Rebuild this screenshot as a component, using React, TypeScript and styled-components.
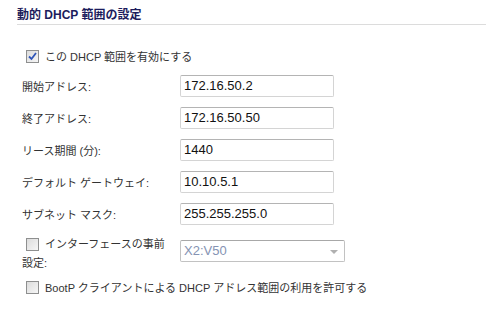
import React from 'react';
import styled, { createGlobalStyle } from 'styled-components';

const GlobalStyle = createGlobalStyle`
    body {
        margin: 0;
        background: #ffffff;
        font-family: 'Liberation Sans', 'Noto Sans CJK JP', sans-serif;
        color: #333333;
    }
`;

const CJK = `'Liberation Sans', 'Noto Sans CJK JP', sans-serif`;

interface Field {
    label: string;
    value: string;
}

const fields: Field[] = [
    { label: '開始アドレス:', value: '172.16.50.2' },
    { label: '終了アドレス:', value: '172.16.50.50' },
    { label: 'リース期間 (分):', value: '1440' },
    { label: 'デフォルト ゲートウェイ:', value: '10.10.5.1' },
    { label: 'サブネット マスク:', value: '255.255.255.0' },
];

const Check: React.FunctionComponent<{ checked?: boolean }> = ({ checked }) => (
    <Box>
        {checked && (
            <svg width="9" height="9" viewBox="0 0 9 9">
                <path d="M1 4.5 L3.5 7 L8 1" fill="none" stroke="#2f55b8" strokeWidth="1.8" />
            </svg>
        )}
    </Box>
);

const App: React.FunctionComponent = () => {
    return (
        <Page>
            <GlobalStyle />
            <Title>動的 DHCP 範囲の設定</Title>

            <CheckRow>
                <Check checked />
                <CheckText>この DHCP 範囲を有効にする</CheckText>
            </CheckRow>

            <Form>
                {fields.map(f => (
                    <Row key={f.label}>
                        <Label>{f.label}</Label>
                        <Input>{f.value}</Input>
                    </Row>
                ))}

                <IfaceRow>
                    <IfaceLabel>
                        <FirstLine>
                            <Check />
                            <CheckText>インターフェースの事前</CheckText>
                        </FirstLine>
                        設定:
                    </IfaceLabel>
                    <Select>
                        X2:V50
                        <Arrow />
                    </Select>
                </IfaceRow>
            </Form>

            <BootRow>
                <Check />
                <CheckText>BootP クライアントによる DHCP アドレス範囲の利用を許可する</CheckText>
            </BootRow>
        </Page>
    );
};

export default App;

const Page = styled.div`
    padding: 8px 0 0 17px;
    width: 469px;
`;

const Title = styled.div`
    font-family: ${CJK};
    font-size: 12px;
    font-weight: bold;
    color: #1c1c5c;
    line-height: 15px;
    padding-bottom: 1px;
    border-bottom: 1px solid #dcdcdc;
`;

const CheckRow = styled.div`
    display: flex;
    align-items: center;
    margin: 24px 0 0 9px;
    height: 14px;
`;

const Box = styled.span`
    box-sizing: border-box;
    width: 13px;
    height: 13px;
    border: 1px solid #8e8f8f;
    background: linear-gradient(135deg, #dcdcdc 0%, #f6f6f6 100%);
    display: inline-flex;
    align-items: center;
    justify-content: center;
    flex-shrink: 0;
`;

const CheckText = styled.span`
    font-family: ${CJK};
    font-size: 11px;
    color: #333333;
    margin-left: 6px;
    white-space: nowrap;
`;

const Form = styled.div`
    margin-top: 12px;
    display: flex;
    flex-direction: column;
    gap: 10px;
`;

const Row = styled.div`
    display: grid;
    grid-template-columns: 163px 154px;
    align-items: center;
    height: 22px;
`;

const Label = styled.div`
    font-family: ${CJK};
    font-size: 11px;
    color: #333333;
    padding-left: 5px;
    white-space: nowrap;
`;

const Input = styled.div`
    box-sizing: border-box;
    height: 22px;
    border: 1px solid #d4d4d4;
    border-top-color: #b4b4b4;
    border-radius: 2px;
    padding: 0 3px;
    font-family: 'Liberation Sans', sans-serif;
    font-size: 13px;
    line-height: 20px;
    color: #111111;
`;

const IfaceRow = styled.div`
    display: grid;
    grid-template-columns: 163px 165px;
    align-items: start;
`;

const IfaceLabel = styled.div`
    font-family: ${CJK};
    font-size: 11px;
    line-height: 19px;
    color: #333333;
    padding-left: 5px;
`;

const FirstLine = styled.div`
    display: flex;
    align-items: center;
    height: 19px;
    padding-left: 4px;
`;

const Select = styled.div`
    position: relative;
    box-sizing: border-box;
    height: 22px;
    margin-top: 5px;
    border: 1px solid #c2c2c2;
    border-top-color: #a8a8a8;
    border-radius: 2px;
    padding: 0 3px;
    font-family: 'Liberation Sans', sans-serif;
    font-size: 13px;
    line-height: 20px;
    color: #8593b3;
`;

const Arrow = styled.span`
    position: absolute;
    right: 6px;
    top: 9px;
    width: 0;
    height: 0;
    border-left: 4px solid transparent;
    border-right: 4px solid transparent;
    border-top: 4px solid #b0b0b0;
`;

const BootRow = styled.div`
    display: flex;
    align-items: center;
    margin: 7px 0 0 9px;
    height: 14px;
`;
